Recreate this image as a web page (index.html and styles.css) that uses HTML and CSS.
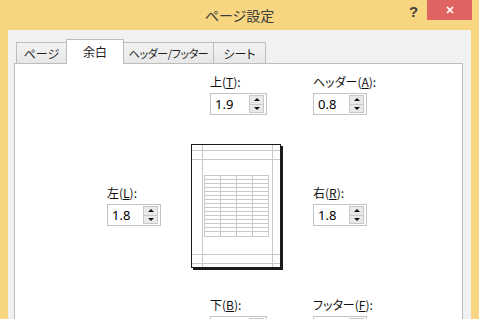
FILE: index.html
```html
<!DOCTYPE html>
<html lang="ja">
<head>
<meta charset="utf-8">
<title>ページ設定</title>
<link rel="stylesheet" href="styles.css">
</head>
<body>
<div class="window">
  <div class="titlebar">
    <div class="title">ページ設定</div>
    <div class="caption-buttons">
      <span class="help">?</span>
      <span class="close"><svg width="8" height="8" viewBox="0 0 8 8"><path d="M1 1L7 7M7 1L1 7" stroke="#fff" stroke-width="1.7" fill="none"/></svg></span>
    </div>
  </div>
  <div class="client">
    <div class="tabs">
      <div class="tab t1">ページ</div>
      <div class="tab t2 active">余白</div>
      <div class="tab t3">ヘッダー/フッター</div>
      <div class="tab t4">シート</div>
    </div>
    <div class="panel">
      <div class="field f-top">
        <div class="label">上(<u>T</u>):</div>
        <div class="spin wide"><span class="value">1.9</span><span class="arrows"><span class="arrow up"></span><span class="arrow down"></span></span></div>
      </div>
      <div class="field f-header">
        <div class="label">ヘッダー(<u>A</u>):</div>
        <div class="spin"><span class="value">0.8</span><span class="arrows"><span class="arrow up"></span><span class="arrow down"></span></span></div>
      </div>
      <div class="field f-left">
        <div class="label">左(<u>L</u>):</div>
        <div class="spin"><span class="value">1.8</span><span class="arrows"><span class="arrow up"></span><span class="arrow down"></span></span></div>
      </div>
      <svg class="preview" width="92" height="126" viewBox="0 0 92 126">
        <rect x="2" y="2" width="90" height="124" fill="#1b1b1b"/>
        <rect x="0.5" y="0.5" width="89" height="123" fill="#fff" stroke="#1b1b1b"/>
        <path d="M11.5 1V123M81.5 1V123M1 6.5H89M1 15.5H89M1 110.5H89M1 119.5H89" stroke="#C9C9C9" fill="none"/>
        <g stroke="#C9C9C9" fill="none">
          <rect x="13.5" y="31.5" width="64" height="61"/>
          <path d="M29.5 31.5V92.5M45.5 31.5V92.5M61.5 31.5V92.5"/>
          <path d="M13.5 35.5H77.5M13.5 39.5H77.5M13.5 43.5H77.5M13.5 47.5H77.5M13.5 51.5H77.5M13.5 55.5H77.5M13.5 59.5H77.5M13.5 63.5H77.5M13.5 67.5H77.5M13.5 71.5H77.5M13.5 75.5H77.5M13.5 79.5H77.5M13.5 83.5H77.5M13.5 87.5H77.5"/>
        </g>
      </svg>
      <div class="field f-right">
        <div class="label">右(<u>R</u>):</div>
        <div class="spin"><span class="value">1.8</span><span class="arrows"><span class="arrow up"></span><span class="arrow down"></span></span></div>
      </div>
      <div class="field f-bottom">
        <div class="label">下(<u>B</u>):</div>
        <div class="spin wide"><span class="value"></span><span class="arrows"><span class="arrow up"></span><span class="arrow down"></span></span></div>
      </div>
      <div class="field f-footer">
        <div class="label">フッター(<u>F</u>):</div>
        <div class="spin"><span class="value"></span><span class="arrows"><span class="arrow up"></span><span class="arrow down"></span></span></div>
      </div>
    </div>
  </div>
</div>
</body>
</html>
```

FILE: styles.css
```css
* { box-sizing: border-box; }
html, body { margin: 0; padding: 0; }
body {
  width: 479px;
  height: 319px;
  overflow: hidden;
  background: #F7D581;
  font-family: "Noto Sans CJK JP", sans-serif;
}
.window {
  background: #F7D581;
  height: 319px;
}
.titlebar {
  height: 30px;
  display: grid;
  grid-template-columns: 74px 1fr 74px;
}
.title {
  grid-column: 2;
  text-align: center;
  font-size: 14px;
  line-height: 31px;
  color: #3b3b3b;
  font-feature-settings: "palt";
}
.caption-buttons {
  display: flex;
  justify-content: flex-end;
  align-items: flex-start;
  padding-right: 7px;
}
.help {
  width: 17px;
  margin-right: 5px;
  font-family: "Liberation Sans", sans-serif;
  font-weight: bold;
  font-size: 15px;
  line-height: 23px;
  color: #404040;
  text-align: center;
}
.close {
  width: 45px;
  height: 20px;
  background: #DF6461;
  display: flex;
  align-items: center;
  justify-content: center;
}
.close svg { display: block; }
.client {
  margin: 0 8px;
  height: 289px;
  background: #F1F1F1;
  padding: 9px 8px 0 6px;
}
.tabs {
  display: flex;
  align-items: flex-end;
  height: 25px;
  margin-bottom: -1px;
  padding-left: 2px;
  position: relative;
  z-index: 1;
}
.tab {
  height: 21px;
  margin-bottom: 1px;
  border: 1px solid #BDBDBD;
  border-bottom: none;
  background: linear-gradient(#F3F3F3, #E7E7E7);
  font-size: 12px;
  color: #1e1e1e;
  display: flex;
  align-items: center;
  justify-content: center;
  white-space: nowrap;
  font-feature-settings: "palt";
}
.tab + .tab { margin-left: -1px; }
.t1 { width: 51px; }
.t2 { width: 58px; }
.t3 { width: 91px; font-size: 11px; letter-spacing: -0.4px; }
.t4 { width: 53px; }
.tab.active {
  height: 25px;
  margin-bottom: 0;
  background: #fff;
  padding-bottom: 1px;
}
.panel {
  background: #fff;
  border: 1px solid #BDBDBD;
  height: 280px;
  display: grid;
  grid-template-columns: 84px 122px 1fr;
  align-content: start;
  align-items: start;
  row-gap: 29px;
  padding: 10px 0 0 92px;
}
.field {
  display: flex;
  flex-direction: column;
  align-items: flex-start;
}
.label {
  font-size: 12px;
  line-height: 16px;
  color: #111;
  margin-bottom: 3px;
  white-space: nowrap;
  font-feature-settings: "palt";
}
.label u { text-underline-offset: 1px; }
.spin {
  width: 54px;
  height: 22px;
  border: 1px solid #C3C3C3;
  display: flex;
  align-items: center;
  background: #fff;
}
.spin.wide { width: 57px; }
.value {
  flex: 1;
  padding-left: 4px;
  font-family: "Noto Sans", sans-serif;
  font-size: 13px;
  line-height: 20px;
  color: #000;
}
.arrows {
  width: 15px;
  height: 18px;
  margin-right: 2px;
  display: flex;
  flex-direction: column;
  border: 1px solid #C8C8C8;
  background: #E9E9E9;
}
.arrow {
  flex: 1;
  display: flex;
  align-items: center;
  justify-content: center;
}
.arrow + .arrow { border-top: 1px solid #C8C8C8; }
.arrow::before {
  content: "";
  border-left: 3px solid transparent;
  border-right: 3px solid transparent;
}
.up::before { border-bottom: 3px solid #111; }
.down::before { border-top: 3px solid #111; }
.f-top { grid-column: 2; grid-row: 1; margin-left: 19px; }
.f-header { grid-column: 3; grid-row: 1; }
.f-left { grid-column: 1; grid-row: 2; margin-top: 41px; }
.preview { grid-column: 2; grid-row: 2; display: block; }
.f-right { grid-column: 3; grid-row: 2; margin-top: 41px; }
.f-bottom { grid-column: 2; grid-row: 3; margin-left: 19px; margin-top: -2px; }
.f-footer { grid-column: 3; grid-row: 3; margin-top: -2px; }
```
